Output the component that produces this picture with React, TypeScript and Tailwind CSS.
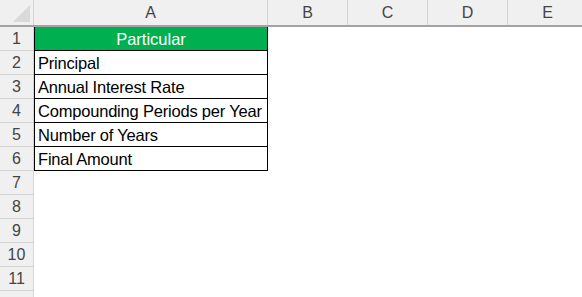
const columns = [
  { label: 'A', width: 'w-[234px]' },
  { label: 'B', width: 'w-[80px]' },
  { label: 'C', width: 'w-[80px]' },
  { label: 'D', width: 'w-[80px]' },
  { label: 'E', width: 'w-[80px]' },
];

const items = [
  'Principal',
  'Annual Interest Rate',
  'Compounding Periods per Year',
  'Number of Years',
  'Final Amount',
];

const App = () => {
  const emptyRows = [7, 8, 9, 10, 11];

  return (
    <div className="w-[582px] h-[297px] overflow-hidden bg-white font-['Liberation_Sans',Arial,sans-serif] text-[16px]">
      {/* Column headers */}
      <div className="flex h-[27px] bg-[#f0f0f0] border-b-2 border-[#a3a3a3]">
        <div className="w-[34px] shrink-0 border-r border-[#d4d4d4] flex items-end justify-end pr-[2px] pb-[2px]">
          <svg width="18" height="18" viewBox="0 0 18 18">
            <polygon points="17,0 17,17 0,17" fill="#d9d9d9" />
          </svg>
        </div>
        {columns.map((col) => (
          <div
            key={col.label}
            className={`${col.width} shrink-0 border-r border-[#d4d4d4] flex items-center justify-center text-[#444] pt-[1px]`}
          >
            {col.label}
          </div>
        ))}
      </div>

      {/* Title row */}
      <div className="flex h-[24px]">
        <div className="w-[34px] shrink-0 bg-[#f0f0f0] border-r border-b border-[#d4d4d4] flex items-center justify-center text-[#444] pt-[1px]">
          1
        </div>
        <div className="w-[234px] shrink-0 bg-[#00b050] border-x border-b border-black flex items-center justify-center text-white text-[16.5px] pt-[1px]">
          Particular
        </div>
      </div>

      {/* Data rows */}
      {items.map((item, i) => (
        <div key={item} className="flex h-[24px]">
          <div className="w-[34px] shrink-0 bg-[#f0f0f0] border-r border-b border-[#d4d4d4] flex items-center justify-center text-[#444] pt-[1px]">
            {i + 2}
          </div>
          <div className="w-[234px] shrink-0 border-x border-b border-black flex items-center pl-[3px] pt-[1px] text-black text-[16.5px] tracking-[-0.2px] whitespace-nowrap">
            {item}
          </div>
        </div>
      ))}

      {/* Empty rows */}
      {emptyRows.map((n) => (
        <div key={n} className="flex h-[24px]">
          <div className="w-[34px] shrink-0 bg-[#f0f0f0] border-r border-b border-[#d4d4d4] flex items-center justify-center text-[#444] pt-[1px]">
            {n}
          </div>
        </div>
      ))}
      <div className="w-[34px] h-[24px] bg-[#f0f0f0] border-r border-[#d4d4d4]" />
    </div>
  );
};

export default App;
